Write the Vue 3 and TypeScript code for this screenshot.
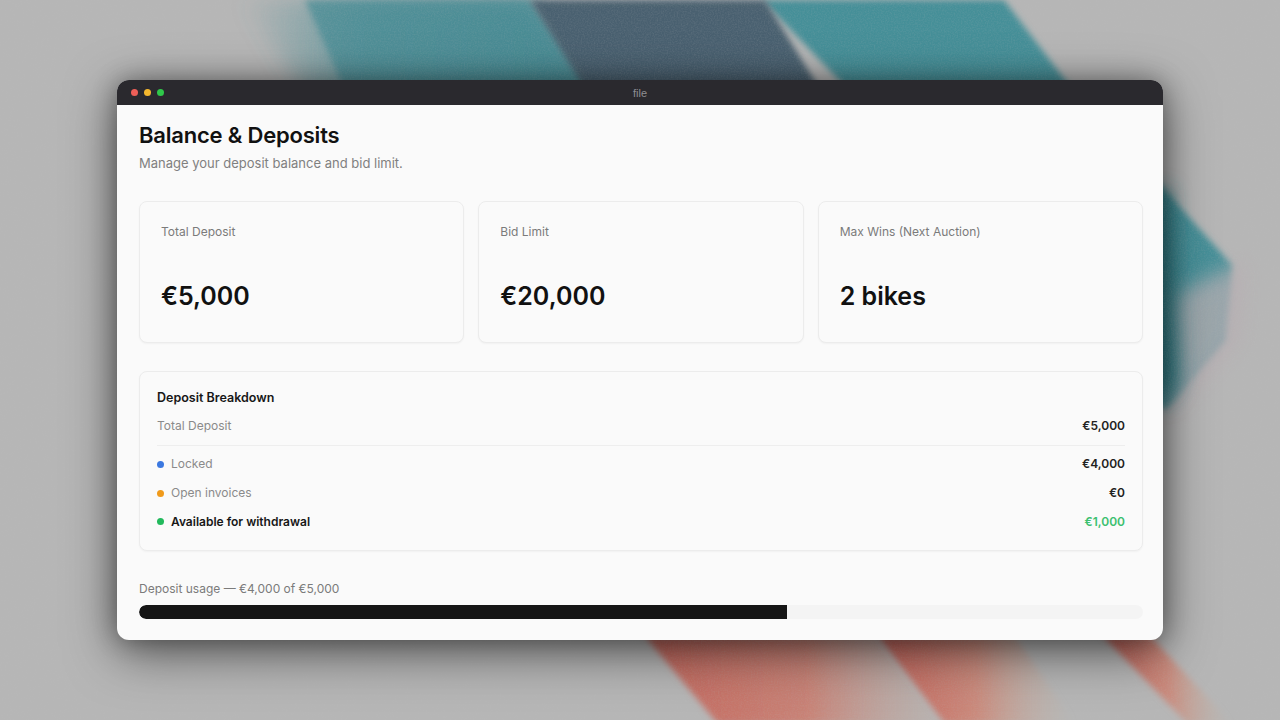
<script setup lang="ts">
interface Stat { label: string; value: string }
interface Row { label: string; value: string; dot: string; strong?: boolean; green?: boolean }

const stats: Stat[] = [
  { label: 'Total Deposit', value: '€5,000' },
  { label: 'Bid Limit', value: '€20,000' },
  { label: 'Max Wins (Next Auction)', value: '2 bikes' },
]
const rows: Row[] = [
  { label: 'Locked', value: '€4,000', dot: '#3b78e0' },
  { label: 'Open invoices', value: '€0', dot: '#f09a1a' },
  { label: 'Available for withdrawal', value: '€1,000', dot: '#22b95c', strong: true, green: true },
]
const usage = 64.5
</script>

<template>
  <div class="stage">
    <svg class="backdrop" viewBox="0 0 1280 720" width="1280" height="720" aria-hidden="true">
      <defs>
        <filter id="b1" x="-30%" y="-30%" width="160%" height="160%"><feGaussianBlur stdDeviation="10" /></filter>
        <filter id="b2" x="-30%" y="-30%" width="160%" height="160%"><feGaussianBlur stdDeviation="3" /></filter>
        <filter id="b3" x="-30%" y="-30%" width="160%" height="160%"><feGaussianBlur stdDeviation="14" /></filter>
        <linearGradient id="fade1" x1="0" y1="0" x2="1" y2="0">
          <stop offset="0" stop-color="#4c8f97" stop-opacity="0" />
          <stop offset="0.35" stop-color="#4c8f97" stop-opacity="0.75" />
          <stop offset="1" stop-color="#42838c" />
        </linearGradient>
        <linearGradient id="redA" x1="0" y1="0" x2="1" y2="0">
          <stop offset="0" stop-color="#c4675d" />
          <stop offset="0.55" stop-color="#c98276" />
          <stop offset="1" stop-color="#bcaaa2" stop-opacity="0.3" />
        </linearGradient>
        <linearGradient id="redB" x1="0" y1="0" x2="1" y2="0">
          <stop offset="0" stop-color="#c5635a" />
          <stop offset="0.5" stop-color="#cb8a7c" />
          <stop offset="1" stop-color="#c4b4a4" stop-opacity="0" />
        </linearGradient>
        <filter id="grain" x="0" y="0" width="100%" height="100%">
          <feTurbulence type="fractalNoise" baseFrequency="0.7" numOctaves="2" seed="4" />
          <feColorMatrix type="matrix" values="0 0 0 0 0.5  0 0 0 0 0.5  0 0 0 0 0.5  0 0 0 0.9 -0.32" />
        </filter>
      </defs>
      <rect width="1280" height="720" fill="#b6b6b6" />
      <polygon points="240,0 530,0 620,130 330,130" fill="url(#fade1)" filter="url(#b1)" />
      <polygon points="305,0 530,0 640,150 372,150" fill="#468c95" filter="url(#b2)" opacity="0.75" />
      <polygon points="762,0 1004,0 1065,80 1232,265 1225,340 1165,410 1050,300" fill="#458f98" filter="url(#b2)" />
      <polygon points="1163,300 1245,260 1240,340 1170,420" fill="#b8aeb2" filter="url(#b1)" opacity="0.75" />
      <polygon points="1090,190 1170,190 1180,380 1165,405 1090,330" fill="#2f7a83" filter="url(#b1)" />
      <polygon points="530,0 765,0 845,130 610,130" fill="#4a6170" filter="url(#b2)" />
      <polygon points="645,636 875,636 940,724 718,724" fill="url(#redA)" filter="url(#b2)" />
      <polygon points="878,636 1015,636 1075,724 945,724" fill="url(#redB)" filter="url(#b2)" />
      <polygon points="1103,636 1150,636 1232,724 1188,724" fill="url(#redB)" filter="url(#b2)" />
      <rect width="1280" height="720" filter="url(#grain)" opacity="0.3" />
    </svg>

    <section class="window">
      <header class="titlebar">
        <div class="lights">
          <span class="light red"></span>
          <span class="light yellow"></span>
          <span class="light green"></span>
        </div>
        <span class="filename">file</span>
      </header>

      <main class="content">
        <h1 class="title">Balance &amp; Deposits</h1>
        <p class="subtitle">Manage your deposit balance and bid limit.</p>

        <div class="stats">
          <article v-for="s in stats" :key="s.label" class="card stat">
            <span class="stat-label">{{ s.label }}</span>
            <strong class="stat-value">{{ s.value }}</strong>
          </article>
        </div>

        <div class="card breakdown">
          <h2 class="bd-title">Deposit Breakdown</h2>
          <div class="row total">
            <span class="row-label">Total Deposit</span>
            <span class="row-value">€5,000</span>
          </div>
          <div class="rule"></div>
          <div v-for="r in rows" :key="r.label" class="row item">
            <span class="row-label" :class="{ strong: r.strong }">
              <i class="dot" :style="{ background: r.dot }"></i>{{ r.label }}
            </span>
            <span class="row-value" :class="{ positive: r.green }">{{ r.value }}</span>
          </div>
        </div>

        <div class="usage">
          <span class="usage-label">Deposit usage — €4,000 of €5,000</span>
          <div class="track">
            <div class="fill" :style="{ width: usage + '%' }"></div>
          </div>
        </div>
      </main>
    </section>
  </div>
</template>

<style scoped>
.stage {
  position: relative;
  width: 1280px;
  height: 720px;
  overflow: hidden;
  display: flex;
  align-items: center;
  justify-content: center;
  font-family: Inter, "Liberation Sans", sans-serif;
}
.backdrop {
  position: absolute;
  inset: 0;
  display: block;
}
.window {
  position: relative;
  width: 1046px;
  height: 560px;
  border-radius: 12px;
  overflow: hidden;
  background: #fafafa;
  display: flex;
  flex-direction: column;
  box-shadow: 0 12px 50px rgba(0, 0, 0, 0.55), 0 0 24px rgba(0, 0, 0, 0.3);
}
.titlebar {
  position: relative;
  height: 25px;
  flex: none;
  background: #2a292e;
  display: flex;
  align-items: center;
  justify-content: center;
}
.lights {
  position: absolute;
  left: 14px;
  top: 9px;
  display: flex;
  gap: 6px;
}
.light {
  width: 7px;
  height: 7px;
  border-radius: 50%;
}
.red { background: #ee5f58; }
.yellow { background: #f5b82e; }
.green { background: #2fc84a; }
.filename {
  font-family: "Liberation Sans", sans-serif;
  font-size: 11px;
  color: #8f8e92;
  margin-top: 1px;
}
.content {
  flex: 1;
  padding: 17px 20px 0 22px;
  display: flex;
  flex-direction: column;
  color: #111;
}
.title {
  margin: 0;
  font-size: 22px;
  line-height: 27px;
  font-weight: 600;
  letter-spacing: -0.2px;
  color: #111;
}
.subtitle {
  margin: 5px 0 0;
  font-size: 13px;
  line-height: 18px;
  color: #808080;
}
.stats {
  margin-top: 29px;
  display: grid;
  grid-template-columns: repeat(3, 1fr);
  gap: 14px;
}
.card {
  background: #fafafa;
  border: 1px solid #ececec;
  border-radius: 8px;
  box-shadow: 0 1px 2px rgba(0, 0, 0, 0.04);
}
.stat {
  height: 142px;
  box-sizing: border-box;
  padding: 22px 21px 0;
  display: flex;
  flex-direction: column;
}
.stat-label {
  font-size: 12px;
  line-height: 16px;
  color: #7b7b7b;
}
.stat-value {
  margin-top: 39px;
  font-size: 25px;
  line-height: 34px;
  font-weight: 600;
  color: #111;
}
.breakdown {
  margin-top: 28px;
  height: 180px;
  box-sizing: border-box;
  padding: 17px 17px 0;
  display: flex;
  flex-direction: column;
}
.bd-title {
  margin: 0;
  font-size: 12.5px;
  line-height: 18px;
  font-weight: 600;
  color: #171717;
}
.row {
  display: flex;
  justify-content: space-between;
  align-items: center;
  font-size: 12px;
  line-height: 16px;
}
.total {
  margin-top: 11px;
}
.rule {
  height: 1px;
  background: #eeeeee;
  margin: 11px 0 4px;
}
.item {
  height: 28.7px;
}
.row-label {
  display: flex;
  align-items: center;
  color: #8a8a8a;
}
.row-label.strong {
  color: #171717;
  font-weight: 600;
}
.dot {
  width: 7px;
  height: 7px;
  border-radius: 50%;
  margin-right: 7px;
}
.row-value {
  font-weight: 600;
  color: #222;
}
.row-value.positive {
  color: #3cc070;
}
.usage {
  margin-top: 30px;
  display: flex;
  flex-direction: column;
}
.usage-label {
  font-size: 12px;
  line-height: 16px;
  color: #7b7b7b;
}
.track {
  margin-top: 8px;
  height: 14px;
  border-radius: 7px;
  background: #f4f4f4;
  overflow: hidden;
}
.fill {
  height: 100%;
  background: #161616;
  border-radius: 7px 0 0 7px;
}
</style>
